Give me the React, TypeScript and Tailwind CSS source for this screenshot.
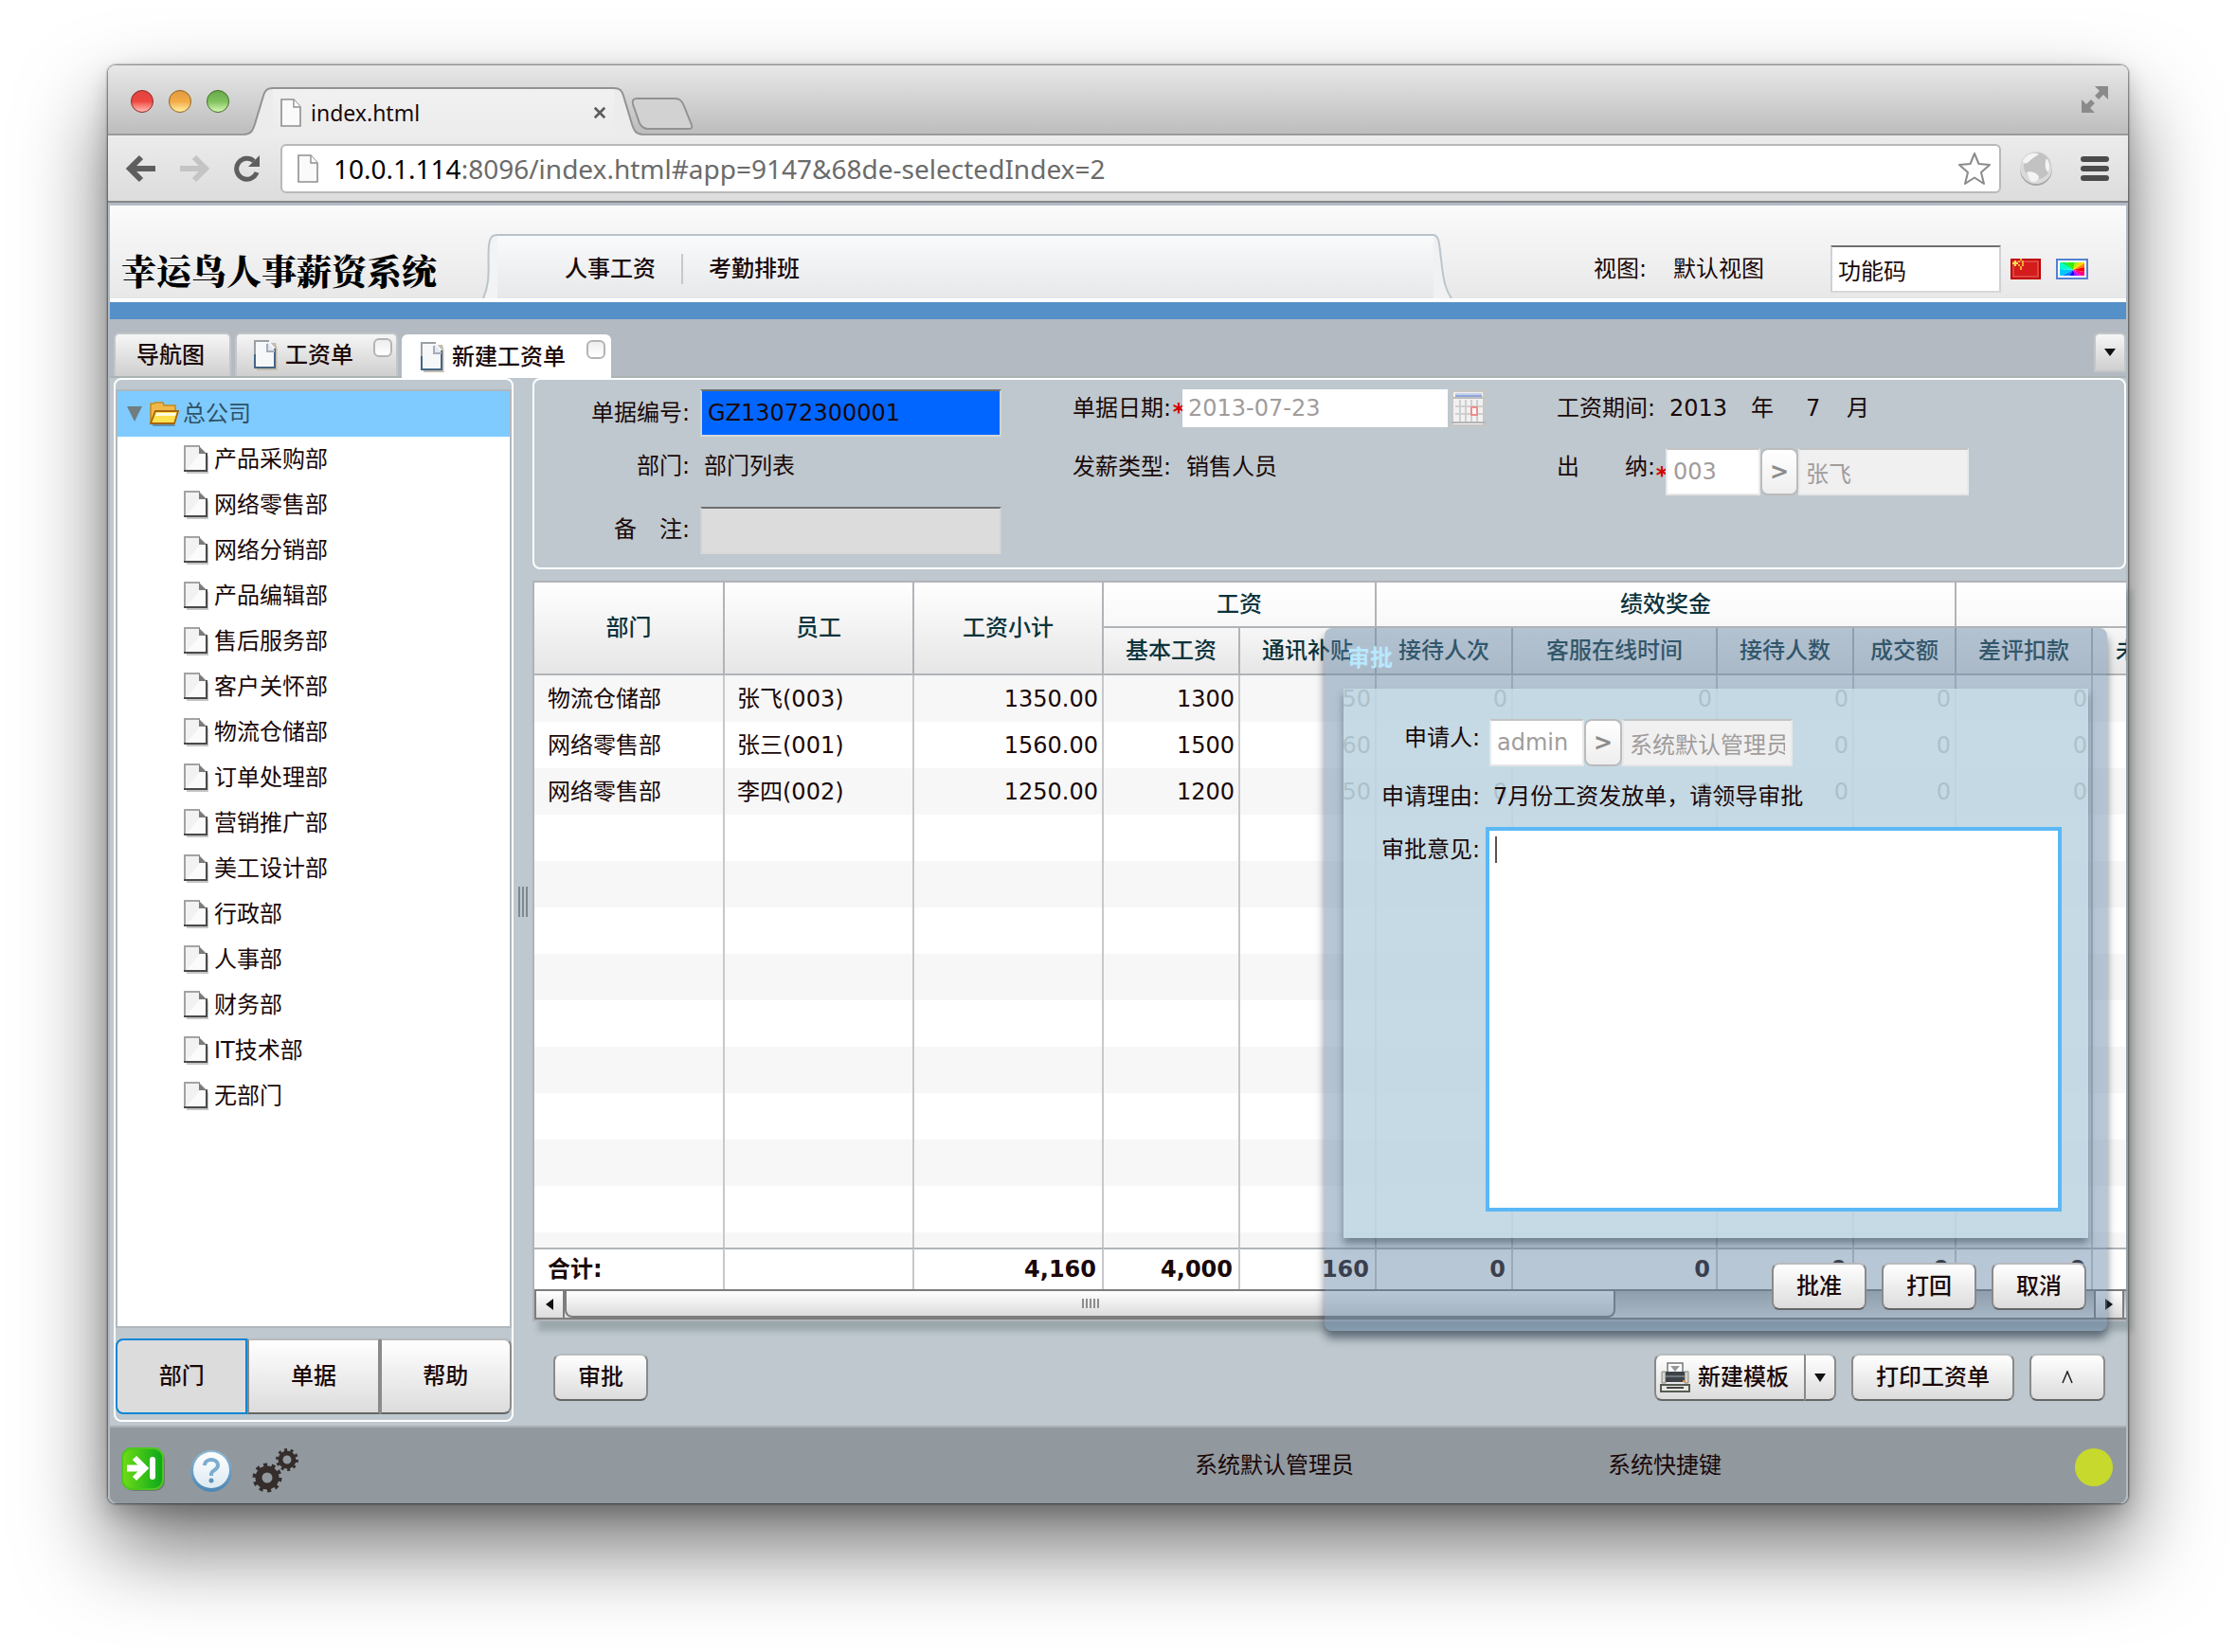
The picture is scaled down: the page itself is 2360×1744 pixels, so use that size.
import React, { useState } from 'react';
import { clsx } from 'clsx';

const departments = [
  '产品采购部', '网络零售部', '网络分销部', '产品编辑部', '售后服务部', '客户关怀部', '物流仓储部',
  '订单处理部', '营销推广部', '美工设计部', '行政部', '人事部', '财务部', 'IT技术部', '无部门',
];

interface SalaryRow {
  dept: string;
  name: string;
  values: string[];
}

const rows: SalaryRow[] = [
  { dept: '物流仓储部', name: '张飞(003)', values: ['1350.00', '1300', '50', '0', '0', '0', '0', '0'] },
  { dept: '网络零售部', name: '张三(001)', values: ['1560.00', '1500', '60', '0', '0', '0', '0', '0'] },
  { dept: '网络零售部', name: '李四(002)', values: ['1250.00', '1200', '50', '0', '0', '0', '0', '0'] },
];

const totals = ['4,160', '4,000', '160', '0', '0', '0', '0', '0'];
const subHeaders = ['基本工资', '通讯补贴', '接待人次', '客服在线时间', '接待人数', '成交额', '差评扣款'];
const fillerRows = [3, 4, 5, 6, 7, 8, 9, 10, 11];

const cell = 'border-r-2 border-[#c6c8ca] overflow-hidden whitespace-nowrap';
const head = 'border-r-2 border-[#b0b4b8] font-medium text-[#0b333c] overflow-hidden whitespace-nowrap';
const sunken = 'h-[50px] min-w-0 border-2 border-t-[#6f6f6f] border-x-[#cfd2d4] border-b-[#d8d8d8] outline-none';
const faded = 'h-[50px] min-w-0 border-2 border-t-[#c3c3c3] border-x-[#e6eaec] border-b-[#e6e6e6] text-[#a19c9c] outline-none';

/* ---------- icons ---------- */

const PageIcon = () => (
  <svg width="22" height="30" viewBox="0 0 22 30">
    <path d="M1 1h13l7 8v20H1z" fill="#fafafa" stroke="#8f8f8f" strokeWidth="1.6" />
    <path d="M14 1v8h7" fill="#fff" stroke="#8f8f8f" strokeWidth="1.4" />
  </svg>
);

const TabDocIcon = () => (
  <svg width="25" height="32" viewBox="0 0 25 32">
    <path d="M3 3h20l1.500 6v23H3z" fill="#c2bcae" />
    <path d="M1 1h15l6 7v21H1z" fill="#f6f7f8" />
    <path d="M16 1H1v15" fill="none" stroke="#9b9fa6" strokeWidth="2" />
    <path d="M1 15v14h21V9" fill="none" stroke="#456584" strokeWidth="2" />
    <path d="M14 2v9h8l-8-9z" fill="#e3e7ee" />
    <path d="M14 4v8h8" fill="none" stroke="#a5adba" strokeWidth="2" />
  </svg>
);

const LeafIcon = () => (
  <svg width="27" height="30" viewBox="0 0 27 30">
    <path d="M3 4h17l6 7v19H3z" fill="#c6c6c6" />
    <path d="M1 1h16l7 7v19H1z" fill="#f2f2f2" />
    <path d="M4 25L18 8l5 3v15H4z" fill="#fbfbfb" />
    <path d="M1 27V1h16" fill="none" stroke="#a3a3a3" strokeWidth="2" />
    <path d="M0 27h24V8" fill="none" stroke="#4a4a4a" strokeWidth="2" />
    <path d="M16 1v8h8z" fill="#7b7b7b" />
  </svg>
);

const FolderIcon = () => (
  <svg width="31" height="26" viewBox="0 0 31 26">
    <path d="M2 24h24l1 2H4z" fill="#5f93b5" />
    <path d="M1 23V2h4l1-1h8l1 3h12v6" fill="#f0b84a" stroke="#c58a22" strokeWidth="1.600" />
    <path d="M1 23L6 10h24l-4 13z" fill="#ffe24d" stroke="#a8650c" strokeWidth="1.800" />
    <path d="M7 12h21l-1 3H6z" fill="#fffbe0" />
  </svg>
);

const FullscreenIcon = () => (
  <svg width="30" height="30" viewBox="0 0 30 30" fill="#8b8b8b">
    <path d="M15 1h14v14l-5-5-5 5-4-4 5-5z" />
    <path d="M1 29V15l5 5 5-5 4 4-5 5 5 5z" />
  </svg>
);

const CalendarIcon = () => (
  <svg width="36" height="40" viewBox="0 0 36 40">
    <rect width="36" height="40" fill="#c6c6c6" />
    <rect x="2" y="3" width="31" height="34" fill="#f1f1f1" />
    <rect x="4" y="4" width="28" height="2" fill="#c5d0ea" />
    <rect x="4" y="6" width="28" height="2" fill="#8ea6dc" />
    <rect x="2" y="8" width="31" height="2" fill="#bbb" />
    <path d="M9 11v23M15 11v23M21 11v23M27 11v23M4 18h29M4 26h29" stroke="#cfcfcf" strokeWidth="2" />
    <rect x="21" y="19" width="6" height="8" fill="#fff" stroke="#f08c8c" strokeWidth="2" />
    <path d="M0 35h36" stroke="#b5b5b5" strokeWidth="2" />
  </svg>
);

const FlagIcon = () => (
  <svg width="32" height="22" viewBox="0 0 32 22">
    <rect width="32" height="22" fill="#c00000" />
    <rect x="2" y="2" width="28" height="18" fill="#e04444" />
    <rect x="4" y="4" width="24" height="14" fill="#d41c1c" />
    <path d="M4 2h2v2h2v2H6v2H4V6H2V4h2z" fill="#ffe04a" />
    <path d="M8 2h2v2H8zM10 0h2v2h-2zM12 2h2v6h-2zM8 6h2v2H8zM10 8h2v4h-2z" fill="#f0a835" />
  </svg>
);

const PaletteIcon = () => (
  <svg width="34" height="22" viewBox="0 0 34 22">
    <rect width="34" height="22" fill="#5580cf" />
    <rect x="2" y="2" width="30" height="18" fill="#fff" />
    <path d="M18 12L4 4h7z" fill="#00f060" />
    <path d="M18 12L11 4h9z" fill="#30f000" />
    <path d="M18 12l2-8h5z" fill="#b0f000" />
    <path d="M18 12l7-8h5v1z" fill="#ffd800" />
    <path d="M18 12l12-7v4z" fill="#ff8000" />
    <path d="M18 12l12-3v5z" fill="#ff0000" />
    <path d="M18 12l12 2v4h-4z" fill="#ff0080" />
    <path d="M18 12l8 6h-6z" fill="#d000ff" />
    <path d="M18 12l2 6h-6z" fill="#2000ff" />
    <path d="M18 12l-4 6H6z" fill="#0080ff" />
    <path d="M18 12L6 18H4v-7z" fill="#00c8ff" />
    <path d="M18 12L4 11V4z" fill="#00ffd0" />
  </svg>
);

const PrinterIcon = () => (
  <svg width="32" height="32" viewBox="0 0 32 32">
    <path d="M8 1h16v12H8z" fill="#fff" stroke="#777" strokeWidth="1.500" />
    <path d="M11 4h10l-5 6z" fill="#999" />
    <path d="M2 10h4v12H2zM26 10h4v12h-4z" fill="#d5d5cf" stroke="#8a8a80" />
    <path d="M6 10h20v11H6z" fill="#3d4347" />
    <path d="M6 14h20v2H6z" fill="#6d767b" />
    <rect x="24" y="19" width="3" height="2" fill="#f08a2c" />
    <path d="M1 24h30v7H1z" fill="#e7e7e2" stroke="#555a50" strokeWidth="2" />
    <path d="M7 26h18v2H7z" fill="#444" />
  </svg>
);

const EnterIcon = () => (
  <svg width="46" height="46" viewBox="0 0 46 46">
    <defs>
      <linearGradient id="enter" x1="0" y1="0" x2="1" y2="0">
        <stop offset="0" stopColor="#6fdc16" />
        <stop offset="1" stopColor="#0aa81a" />
      </linearGradient>
    </defs>
    <rect x="3" y="3" width="43" height="43" rx="10" fill="#6f7a72" />
    <rect x="1" y="1" width="43" height="43" rx="10" fill="url(#enter)" stroke="#4cc71e" strokeWidth="2" />
    <path d="M6 22h17" stroke="#fff" strokeWidth="7" />
    <path d="M14 11l11 11-11 11" fill="none" stroke="#fff" strokeWidth="6" />
    <path d="M33 13v18" stroke="#fff" strokeWidth="6" strokeLinecap="round" />
  </svg>
);

const HelpIcon = () => (
  <svg width="46" height="46" viewBox="0 0 46 46">
    <defs>
      <linearGradient id="help" x1="0" y1="0" x2="0" y2="1">
        <stop offset="0" stopColor="#fff" />
        <stop offset="1" stopColor="#dde9f1" />
      </linearGradient>
      <linearGradient id="helpRing" x1="0" y1="0" x2="0" y2="1">
        <stop offset="0" stopColor="#8fb9d6" />
        <stop offset="1" stopColor="#4c86b4" />
      </linearGradient>
    </defs>
    <circle cx="23" cy="23" r="22" fill="url(#helpRing)" />
    <circle cx="23" cy="22" r="19" fill="url(#help)" />
    <path d="M16 17c0-8 14-8 14 0 0 5-7 5-7 9v2" fill="none" stroke="#7badd0" strokeWidth="4" />
    <circle cx="23" cy="33" r="2.500" fill="#5a93bd" />
  </svg>
);

const GearsIcon = () => (
  <svg width="50" height="50" viewBox="0 0 50 50" fill="none" stroke="#352d2b">
    <circle cx="16" cy="32" r="9" strokeWidth="7" />
    <circle cx="16" cy="32" r="13.500" strokeWidth="4" strokeDasharray="4 4.480" />
    <circle cx="37" cy="13" r="7" strokeWidth="5" />
    <circle cx="37" cy="13" r="10.500" strokeWidth="3" strokeDasharray="3 3.600" />
  </svg>
);

/* ---------- small controls ---------- */

interface PushButtonProps {
  children: React.ReactNode;
  className?: string;
  onClick?: () => void;
}

const PushButton: React.FC<PushButtonProps> = ({ children, className, onClick }) => (
  <button
    onClick={onClick}
    className={clsx(
      'h-[50px] flex items-center rounded-lg border-2 border-t-[#b8babc] border-x-[#8a8a8a] border-b-[#666] bg-linear-to-b from-white to-[#dcdcdc] font-medium',
      className,
    )}
  >
    {children}
  </button>
);

interface LookupProps {
  id: string;
  code: string;
  text: string;
}

const Lookup: React.FC<LookupProps> = ({ id, code, text }) => (
  <div className="flex h-[50px]">
    <input id={id} defaultValue={code} className={clsx(faded, 'w-[100px] bg-white px-1.5')} />
    <button aria-label="选择" className="w-10 rounded-lg border-2 border-[#bbb] bg-linear-to-b from-white to-[#eee] font-bold text-[#8b8b8b]">
      &gt;
    </button>
    <input aria-label={code} readOnly defaultValue={text} className={clsx(faded, 'w-[180px] bg-[#f0f0f0] px-1.5')} />
  </div>
);

const Required = () => <span className="flex w-2 justify-center pt-2 font-bold text-[#d40000]">*</span>;

/* ---------- browser frame ---------- */

const BrowserChrome = () => (
  <div className="font-['Noto_Sans','Noto_Sans_CJK_SC',sans-serif]">
    <div className="flex h-[74px] items-end rounded-t-lg border-b-2 border-[#9a9a9a] bg-linear-to-b from-[#e8e8e8] to-[#bdbdbd]">
      <div className="flex gap-4 self-center pt-1 pl-6">
        <span className="size-6 rounded-full border border-[#8e2320] bg-linear-to-b from-[#e0453f] via-[#ee4540] to-[#ffb9b5]" />
        <span className="size-6 rounded-full border border-[#94601a] bg-linear-to-b from-[#e29a3f] via-[#f2ab45] to-[#fff0a0]" />
        <span className="size-6 rounded-full border border-[#3f6d22] bg-linear-to-b from-[#69a94c] via-[#7fc25c] to-[#d6f8b4]" />
      </div>
      <div className="-mb-0.5 ml-4 flex h-[51px]">
        <svg width="30" height="51" viewBox="0 0 30 51">
          <path d="M0 50C8 49 9 45 11 39L20 9C22 3 24 1 30 1V51H0z" fill="#ececec" />
          <path d="M0 50C8 49 9 45 11 39L20 9C22 3 24 1 30 1" fill="none" stroke="#929292" strokeWidth="2" />
        </svg>
        <div className="flex w-[360px] items-center border-t-2 border-[#929292] bg-linear-to-b from-[#f1f1f1] to-[#ececec] pl-2">
          <PageIcon />
          <span className="ml-2.5 flex-1 text-[23px]">index.html</span>
          <button aria-label="关闭标签" className="pr-2">
            <svg width="14" height="14" viewBox="0 0 16 16" stroke="#5c5c5c" strokeWidth="3"><path d="M2 2l12 12M14 2L2 14" /></svg>
          </button>
        </div>
        <svg width="30" height="51" viewBox="0 0 30 51">
          <path d="M30 50C22 49 21 45 19 39L10 9C8 3 6 1 0 1V51H30z" fill="#ececec" />
          <path d="M30 50C22 49 21 45 19 39L10 9C8 3 6 1 0 1" fill="none" stroke="#929292" strokeWidth="2" />
        </svg>
      </div>
      <button aria-label="新标签" className="-ml-3 mb-1">
        <svg width="66" height="34" viewBox="0 0 66 34">
          <path d="M7 1H46C52 1 54 4 56 9L64 29C65 32 64 33 60 33H18C13 33 11 31 9 27L2 7C1 3 2 1 7 1z" fill="#d2d2d2" stroke="#929292" strokeWidth="2" />
        </svg>
      </button>
      <div className="flex flex-1 justify-end self-center pr-5"><FullscreenIcon /></div>
    </div>
    <div className="flex h-[71px] items-center border-b-2 border-[#85888b] bg-linear-to-b from-[#ececec] to-[#dcdcdc] pl-[18px] pr-5">
      <button aria-label="后退">
        <svg width="34" height="30" viewBox="0 0 34 30" fill="none" stroke="#5e5e5e" strokeWidth="6"><path d="M32 15H6M17 3L5 15l12 12" /></svg>
      </button>
      <button aria-label="前进" className="ml-[22px]">
        <svg width="34" height="30" viewBox="0 0 34 30" fill="none" stroke="#c4c4c4" strokeWidth="6"><path d="M2 15h26M17 3l12 12-12 12" /></svg>
      </button>
      <button aria-label="刷新" className="ml-6">
        <svg width="30" height="30" viewBox="0 0 30 30">
          <path d="M25 19A11 11 0 1 1 22 7" fill="none" stroke="#5e5e5e" strokeWidth="5" />
          <path d="M28 1v12H16z" fill="#5e5e5e" />
        </svg>
      </button>
      <div className="ml-5 flex h-[52px] flex-1 items-center rounded-md border-2 border-[#b9b9b9] bg-white pl-4 pr-2">
        <PageIcon />
        <p className="ml-4 flex-1 text-[28px] text-[#6b6b6b]">
          <span className="text-black">10.0.1.114</span>:8096/index.html#app=9147&amp;68de-selectedIndex=2
        </p>
        <button aria-label="收藏">
          <svg width="36" height="36" viewBox="0 0 36 36">
            <path d="M18 2l4.500 11 11.500 1-9 8 3 12-10-6.500L8 34l3-12-9-8 11.500-1z" fill="#fff" stroke="#8a8a8a" strokeWidth="2" strokeLinejoin="round" />
          </svg>
        </button>
      </div>
      <svg className="ml-[18px]" width="38" height="38" viewBox="0 0 38 38">
        <circle cx="19" cy="20" r="17" fill="#a8a8a8" />
        <circle cx="19" cy="18" r="17" fill="#dadada" />
        <circle cx="20" cy="16" r="14" fill="#c2c2c2" />
        <path d="M5 11c4-8 13-10 17-7-4 2-6 4-9 6-3 4-7 5-8 1zM30 8c4 5 4 10 2 15-4-3-4-10-2-15zM9 23c5-2 12 1 13 5-1 5-6 6-9 4z" fill="#f4f4f4" />
      </svg>
      <button aria-label="菜单" className="ml-7 flex flex-col gap-1">
        <span className="block h-1.5 w-[30px] rounded-sm bg-[#4b4b4b]" />
        <span className="block h-1.5 w-[30px] rounded-sm bg-[#4b4b4b]" />
        <span className="block h-1.5 w-[30px] rounded-sm bg-[#4b4b4b]" />
      </button>
    </div>
  </div>
);

const SystemHeader = () => (
  <header className="flex h-[102px] items-end border-b-4 border-white bg-linear-to-b from-[#fbfbfb] to-[#e8e8e8]">
    <h1 className="mb-1 w-[393px] pl-3 font-['Noto_Serif_CJK_SC','Noto_Sans_CJK_SC',serif] text-[37px] leading-[52px] font-black text-black">幸运鸟人事薪资系统</h1>
    <svg width="16" height="68" viewBox="0 0 16 68">
      <path d="M1 68C10 48 5 30 7 12 8 4 10 1 16 1V68z" fill="#f1f3f5" />
      <path d="M1 68C10 48 5 30 7 12 8 4 10 1 16 1" fill="none" stroke="#bcc5cb" strokeWidth="2" />
    </svg>
    <nav className="flex h-[68px] w-[988px] items-center border-t-2 border-[#b9c2c9] bg-linear-to-b from-[#f8fafc] to-[#e6e8ea] pt-1 pl-[71px] font-medium">
      <a href="#salary">人事工资</a>
      <span className="mx-[27px] h-8 w-0.5 bg-[#c3c9cd]" />
      <a href="#attendance">考勤排班</a>
    </nav>
    <svg width="20" height="68" viewBox="0 0 20 68">
      <path d="M0 1C7 2 6 14 8 26 10 46 12 58 19 68H0z" fill="#eff1f3" />
      <path d="M0 1C7 2 6 14 8 26 10 46 12 58 19 68" fill="none" stroke="#bcc5cb" strokeWidth="2" />
    </svg>
    <div className="flex h-[68px] flex-1 items-center justify-end pt-1.5 pr-10">
      <span>视图:</span>
      <span className="ml-7">默认视图</span>
      <input aria-label="功能码" defaultValue="功能码" className={clsx(sunken, 'ml-[70px] w-[180px] bg-white px-1.5')} />
      <button aria-label="中文" className="ml-2.5"><FlagIcon /></button>
      <button aria-label="主题" className="ml-4"><PaletteIcon /></button>
    </div>
  </header>
);

const tabBase = 'flex h-[46px] items-center rounded-t-md border-2 border-b-0 border-[#c3c5c7] font-medium';
const tabClose = 'mt-1 mr-1 size-5 self-start rounded-md border-2 border-[#b4b4b4] bg-linear-to-b from-[#eee] to-white';

const TabBar = () => (
  <div className="flex h-[62px] items-end gap-1 border-b-2 border-[#abb4b5] bg-[#b3bac2] pl-1">
    <button className={clsx(tabBase, 'w-[124px] bg-linear-to-b from-[#f6f6f6] to-[#cfcfcf] pl-[22px]')}>导航图</button>
    <div className={clsx(tabBase, 'w-[172px] bg-linear-to-b from-[#f6f6f6] to-[#cfcfcf] pl-[18px]')}>
      <TabDocIcon />
      <a href="#list" className="ml-2 flex-1">工资单</a>
      <button aria-label="关闭工资单" className={tabClose} />
    </div>
    <div className={clsx(tabBase, '-mb-0.5 w-[221px] border-white bg-white pl-[18px]')}>
      <TabDocIcon />
      <a href="#new" className="ml-2 flex-1">新建工资单</a>
      <button aria-label="关闭新建工资单" className={tabClose} />
    </div>
    <button aria-label="更多标签" className="mb-1 ml-auto flex h-[42px] w-[34px] items-center justify-center rounded-t-md border-2 border-[#c3c5c7] bg-linear-to-b from-[#f6f6f6] to-[#cfcfcf]">
      <svg width="12" height="8" viewBox="0 0 12 8"><path d="M0 0h12L6 8z" fill="#111" /></svg>
    </button>
  </div>
);

const Sidebar = () => {
  const [pane, setPane] = useState('部门');
  return (
    <aside className="flex w-[422px] flex-col rounded-lg border-2 border-white pt-2.5 pb-1.5">
      <ul className="flex-1 border-2 border-[#b0b8bd] bg-white">
        <li className="flex h-12 items-center bg-[#7fcbff] pl-2.5 text-[#2f5266]">
          <svg width="16" height="16" viewBox="0 0 16 16"><path d="M0 0h16L8 16z" fill="#6f7d80" /></svg>
          <span className="ml-2"><FolderIcon /></span>
          <span className="ml-1">总公司</span>
        </li>
        {departments.map((name) => (
          <li key={name} className="flex h-12 items-center pl-[70px]">
            <LeafIcon />
            <span className="ml-[5px]">{name}</span>
          </li>
        ))}
      </ul>
      <div className="mt-[11px] flex h-20">
        {['部门', '单据', '帮助'].map((name, i) => (
          <button
            key={name}
            onClick={() => setPane(name)}
            className={clsx(
              'flex-1 border-2 font-medium',
              pane === name
                ? 'border-[#0c86d6] bg-[#dcdcdc]'
                : 'border-t-[#b8babc] border-x-[#8a8a8a] border-b-[#666] bg-linear-to-b from-white to-[#dcdcdc]',
              i === 0 && 'rounded-l-lg',
              i === 2 && 'rounded-r-lg',
            )}
          >
            {name}
          </button>
        ))}
      </div>
    </aside>
  );
};

const SlipForm = () => (
  <section className="flex h-[202px] rounded-lg border-2 border-white pt-2.5">
    <div className="grid w-[568px] grid-cols-[164px_318px] grid-rows-[50px_62px_62px] content-start items-center gap-x-[11px]">
      <label htmlFor="no" className="text-right">单据编号:</label>
      <input id="no" defaultValue="GZ13072300001" className={clsx(sunken, 'w-full bg-[#0066ff] px-1.5')} />
      <span className="text-right">部门:</span>
      <span className="pl-1">部门列表</span>
      <label htmlFor="note" className="pt-2.5 text-right">备&emsp;注:</label>
      <input id="note" className={clsx(sunken, 'mt-3 w-full bg-[#dcdcdc] px-1.5')} />
    </div>
    <div className="grid w-[511px] grid-cols-[108px_1fr] grid-rows-[40px_84px] content-start items-center">
      <label htmlFor="date">单据日期:</label>
      <div className="flex h-10 items-center">
        <Required />
        <input id="date" defaultValue="2013-07-23" className="h-10 w-[280px] bg-white px-1.5 text-[#a19c9c] outline-none" />
        <button aria-label="选择日期" className="ml-1"><CalendarIcon /></button>
      </div>
      <span>发薪类型:</span>
      <span className="pl-3">销售人员</span>
    </div>
    <div className="grid flex-1 grid-cols-[107px_1fr] grid-rows-[40px_84px] content-start items-center">
      <span>工资期间:</span>
      <div className="flex pl-3">
        <span className="w-[86px]">2013</span>
        <span className="w-[58px]">年</span>
        <span className="w-[43px]">7</span>
        <span>月</span>
      </div>
      <label htmlFor="cashier" className="whitespace-nowrap">出&emsp;&emsp;纳:</label>
      <div className="flex items-center pt-2.5">
        <Required />
        <Lookup id="cashier" code="003" text="张飞" />
      </div>
    </div>
  </section>
);

const SalaryTable = () => (
  <div className="border-2 border-r-0 border-[#b0b4b8] shadow-[6px_10px_6px_rgba(90,105,110,0.35)]">
    <table className="w-full table-fixed border-separate border-spacing-0 bg-white">
      <colgroup>
        <col className="w-[201px]" />
        <col className="w-[200px]" />
        <col className="w-[200px]" />
        <col className="w-[144px]" />
        <col className="w-[144px]" />
        <col className="w-[144px]" />
        <col className="w-[216px]" />
        <col className="w-[144px]" />
        <col className="w-[108px]" />
        <col className="w-[144px]" />
        <col />
      </colgroup>
      <thead>
        <tr className="h-12">
          <th rowSpan={2} className={clsx(head, 'border-b-2 bg-linear-to-b from-white to-[#e6e6e6]')}>部门</th>
          <th rowSpan={2} className={clsx(head, 'border-b-2 bg-linear-to-b from-white to-[#e6e6e6]')}>员工</th>
          <th rowSpan={2} className={clsx(head, 'border-b-2 bg-linear-to-b from-white to-[#e6e6e6]')}>工资小计</th>
          <th colSpan={2} className={clsx(head, 'border-b-2 bg-linear-to-b from-white to-[#f8f8f8]')}>工资</th>
          <th colSpan={4} className={clsx(head, 'border-b-2 bg-linear-to-b from-white to-[#f8f8f8]')}>绩效奖金</th>
          <th colSpan={2} className="border-b-2 border-[#b0b4b8] bg-linear-to-b from-white to-[#f8f8f8]" />
        </tr>
        <tr className="h-[50px]">
          {subHeaders.map((h) => (
            <th key={h} className={clsx(head, 'border-b-2 bg-linear-to-b from-[#f7f7f7] to-[#e6e6e6]')}>{h}</th>
          ))}
          <th className="overflow-hidden border-b-2 border-[#b0b4b8] bg-linear-to-b from-[#f7f7f7] to-[#e6e6e6] pl-6 text-left font-medium text-[#0b333c]">未</th>
        </tr>
      </thead>
      <tbody>
        {rows.map((row) => (
          <tr key={row.name} className="h-[49px] odd:bg-[#f7f7f7]">
            <td className={clsx(cell, 'pl-3.5')}>{row.dept}</td>
            <td className={clsx(cell, 'pl-[13px]')}>{row.name}</td>
            {row.values.map((v, i) => (
              <td key={i} className={clsx(cell, 'pr-1 text-right')}>{v}</td>
            ))}
            <td />
          </tr>
        ))}
        {fillerRows.map((n) => (
          <tr key={n} className="h-[49px] odd:bg-[#f7f7f7]">
            {[0, 1, 2, 3, 4, 5, 6, 7, 8, 9].map((c) => <td key={c} className={cell} />)}
            <td />
          </tr>
        ))}
        <tr className="h-4 bg-[#f7f7f7]">
          {[0, 1, 2, 3, 4, 5, 6, 7, 8, 9].map((c) => <td key={c} className={cell} />)}
          <td />
        </tr>
      </tbody>
      <tfoot>
        <tr className="h-11 font-bold">
          <td className={clsx(cell, 'border-t-2 border-t-[#b0b4b8] pl-3.5')}>合计:</td>
          <td className={clsx(cell, 'border-t-2 border-t-[#b0b4b8]')} />
          {totals.map((v, i) => (
            <td key={i} className={clsx(cell, 'border-t-2 border-t-[#b0b4b8] pr-1.5 text-right')}>{v}</td>
          ))}
          <td className="border-t-2 border-[#b0b4b8]" />
        </tr>
      </tfoot>
    </table>
    <div className="flex h-8 border-y-2 border-[#7d7d7d] bg-linear-to-b from-[#b5b5b5] to-[#e2e2e2]">
      <button aria-label="向左滚动" className="flex w-8 items-center justify-center border-x-2 border-[#7d7d7d] bg-linear-to-b from-white to-[#dcdcdc]">
        <svg width="8" height="12" viewBox="0 0 8 12"><path d="M8 0v12L0 6z" fill="#111" /></svg>
      </button>
      <div className="flex w-[1109px] items-start justify-center gap-0.5 rounded-b-lg border-2 border-t-0 border-[#7d7d7d] bg-linear-to-b from-white to-[#dcdcdc] pt-2">
        {[0, 1, 2, 3, 4].map((n) => <span key={n} className="h-2.5 w-0.5 bg-[#8d8d8d]" />)}
      </div>
      <button aria-label="向右滚动" className="mr-0.5 ml-auto flex w-8 items-center justify-center border-x-2 border-[#7d7d7d] bg-linear-to-b from-white to-[#dcdcdc]">
        <svg width="8" height="12" viewBox="0 0 8 12"><path d="M0 0v12l8-6z" fill="#111" /></svg>
      </button>
    </div>
  </div>
);

const ApprovalDialog: React.FC<{ onClose: () => void }> = ({ onClose }) => (
  <div
    role="dialog"
    aria-label="审批"
    className="absolute top-[50px] right-5 flex h-[742px] w-[826px] flex-col rounded-lg bg-[rgba(98,131,164,0.45)] px-5 shadow-[0_8px_10px_rgba(40,55,70,0.6)]"
  >
    <h2 className="flex h-16 items-center pl-1 font-bold text-[#b9e8ff]">审批</h2>
    <div className="grid h-[580px] grid-cols-[144px_1fr] grid-rows-[50px_50px_1fr] gap-y-[7px] bg-[rgba(199,222,231,0.81)] pt-8 shadow-[0_6px_8px_rgba(50,65,80,0.5)]">
      <label htmlFor="applicant" className="pt-1 text-right">申请人:</label>
      <div className="pl-2.5"><Lookup id="applicant" code="admin" text="系统默认管理员" /></div>
      <span className="self-center text-right">申请理由:</span>
      <span className="self-center pl-3.5">7月份工资发放单，请领导审批</span>
      <label htmlFor="opinion" className="pt-2 text-right">审批意见:</label>
      <div className="relative pl-1.5">
        <textarea id="opinion" className="block h-[406px] w-[608px] resize-none border-4 border-[#5bb8f5] bg-white px-1.5 py-1 outline-none" />
        <span className="absolute top-2.5 left-4 h-7 w-0.5 bg-[#555]" />
      </div>
    </div>
    <div className="mt-[26px] flex justify-end gap-4 pr-0.5">
      <PushButton className="w-[100px] justify-center">批准</PushButton>
      <PushButton className="w-[100px] justify-center">打回</PushButton>
      <PushButton className="w-[100px] justify-center" onClick={onClose}>取消</PushButton>
    </div>
  </div>
);

const StatusBar = () => (
  <footer className="flex h-20 items-center rounded-b-lg bg-[#91999f] pr-3.5 pl-3">
    <button aria-label="退出" className="pt-2"><EnterIcon /></button>
    <button aria-label="帮助" className="ml-[26px] pt-3"><HelpIcon /></button>
    <button aria-label="设置" className="ml-5 pt-3"><GearsIcon /></button>
    <span className="ml-auto w-[436px]">系统默认管理员</span>
    <span className="w-[493px]">系统快捷键</span>
    <span className="mt-1 size-10 rounded-full bg-[#c6d92c]" />
  </footer>
);

const App: React.FC = () => {
  const [approving, setApproving] = useState(true);

  return (
    <div className="min-h-screen bg-white px-[114px] pt-[69px] pb-[157px] font-['DejaVu_Sans','Noto_Sans_CJK_SC',sans-serif] text-[24px] leading-8 text-[#1a0808]">
      <div className="rounded-lg shadow-[0_0_2px_1px_rgba(0,0,0,0.5),0_10px_24px_rgba(0,0,0,0.2),0_46px_90px_rgba(0,0,0,0.55)]">
        <BrowserChrome />
        <div className="rounded-b-lg border-x-2 border-t-[3px] border-[#b3bbc3] bg-[#bec8ce]">
          <SystemHeader />
          <div className="h-[18px] bg-[#5590c9]" />
          <TabBar />
          <main className="flex border-b-2 border-[#a9b1b3] pb-1 pl-1">
            <Sidebar />
            <div className="flex w-5 items-center justify-center gap-0.5 pt-1">
              <span className="h-8 w-0.5 bg-[#7f888d]" />
              <span className="h-8 w-0.5 bg-[#7f888d]" />
              <span className="h-8 w-0.5 bg-[#7f888d]" />
            </div>
            <div className="min-w-0 flex-1">
              <SlipForm />
              <div className="relative mt-3">
                <SalaryTable />
                {approving && <ApprovalDialog onClose={() => setApproving(false)} />}
              </div>
              <div className="mt-[34px] mb-[22px] flex gap-4 pr-[22px] pl-[22px]">
                <PushButton className="mr-auto w-[100px] justify-center" onClick={() => setApproving(true)}>审批</PushButton>
                <div className="flex">
                  <PushButton className="w-[158px] gap-2 rounded-r-none border-r-0 pl-1"><PrinterIcon />新建模板</PushButton>
                  <PushButton className="w-[34px] justify-center rounded-l-none">
                    <svg width="12" height="9" viewBox="0 0 12 9"><path d="M0 0h12L6 9z" fill="#111" /></svg>
                  </PushButton>
                </div>
                <PushButton className="w-[172px] justify-center">打印工资单</PushButton>
                <PushButton className="w-20 justify-center">
                  <svg width="12" height="14" viewBox="0 0 12 14" fill="none" stroke="#222" strokeWidth="1.500"><path d="M1 13L6 1l5 12" /></svg>
                </PushButton>
              </div>
            </div>
          </main>
          <StatusBar />
        </div>
      </div>
    </div>
  );
};

export default App;
